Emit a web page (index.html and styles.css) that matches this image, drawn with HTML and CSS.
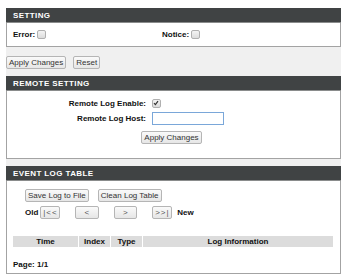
FILE: index.html
```html
<!DOCTYPE html>
<html>
<head>
<meta charset="utf-8">
<link rel="stylesheet" href="styles.css">
</head>
<body>
<div class="page">
  <div class="box">
    <div class="hd">SETTING</div>
    <div class="bd set-row">
      <div class="item">Error: <span class="cb"></span></div>
      <div class="item">Notice: <span class="cb"></span></div>
    </div>
  </div>
  <div class="bar">
    <button class="btn">Apply Changes</button>
    <button class="btn">Reset</button>
  </div>
  <div class="box">
    <div class="hd">REMOTE SETTING</div>
    <div class="bd remote">
      <div class="frow"><div class="lbl">Remote Log Enable:</div><span class="cb checked"><svg width="8" height="8" viewBox="0 0 8 8"><path d="M2 4.2 L3.4 5.6 L6 2.2" fill="none" stroke="#333" stroke-width="1.2"/></svg></span></div>
      <div class="frow"><div class="lbl">Remote Log Host:</div><input class="txt" type="text"></div>
      <div class="center"><button class="btn">Apply Changes</button></div>
    </div>
  </div>
  <div class="gap"></div>
  <div class="box">
    <div class="hd">EVENT LOG TABLE</div>
    <div class="bd evt">
      <div class="brow">
        <button class="btn">Save Log to File</button>
        <button class="btn">Clean Log Table</button>
      </div>
      <div class="nrow">
        <b class="old">Old</b>
        <button class="btn nav w20">|&lt;&lt;</button>
        <button class="btn nav w24">&lt;</button>
        <button class="btn nav w23">&gt;</button>
        <button class="btn nav w20">&gt;&gt;|</button>
        <b class="new">New</b>
      </div>
      <table class="log">
        <tr><th class="c1">Time</th><th class="c2">Index</th><th class="c3">Type</th><th>Log Information</th></tr>
      </table>
      <div class="pg">Page: 1/1</div>
    </div>
  </div>
</div>
</body>
</html>
```
FILE: styles.css
```css
html, body { margin: 0; padding: 0; background: #fff; }
body { font-family: "Liberation Sans", Arial, sans-serif; font-size: 8px; color: #111; }
.page { margin: 8px 0 0 6px; width: 335px; background: #f0f0f0; }
.box { background: #fff; }
.hd { height: 15px; line-height: 15px; background: #404344; color: #fff; font-weight: bold; font-size: 8px; letter-spacing: 0.4px; padding-left: 7px; border-bottom: 1px solid #8a8c8c; box-sizing: border-box; }
.bd { border: 1px solid #a3a3a3; border-top: none; box-sizing: border-box; }
.set-row { height: 24px; display: grid; grid-template-columns: 149px 1fr; align-items: center; padding-left: 6px; font-weight: bold; }
.item { display: flex; align-items: center; gap: 2px; }
.cb { display: inline-block; width: 7px; height: 7px; border: 1px solid #b0b0b0; border-radius: 2px; background: linear-gradient(#f4f4f4, #dcdcdc); position: relative; }
.cb svg { position: absolute; left: -1px; top: -1px; }
.bar { height: 29px; display: flex; align-items: flex-start; gap: 7px; padding-top: 9px; box-sizing: border-box; }
.btn { font-family: inherit; font-size: 8px; height: 13px; padding: 0 2px; margin: 0; border: 1px solid #b5b5b5; border-radius: 2px; background: linear-gradient(#fafafa, #e6e6e6); color: #333; line-height: 11px; white-space: nowrap; }
.remote { height: 68px; padding-top: 6px; }
.frow { display: flex; align-items: center; height: 12px; margin-bottom: 1px; }
.lbl { width: 145px; text-align: right; font-weight: bold; padding-right: 6px; box-sizing: border-box; }
.txt { width: 72px; height: 13px; box-sizing: border-box; border: 1px solid #7aa7d9; margin: 0; padding: 0; }
.remote .frow:nth-child(2) { margin-top: 2px; height: 14px; }
.center { text-align: center; margin-top: 6px; padding-right: 4px; }
.gap { height: 7px; }
.evt { height: 93px; padding: 8px 6px 0 6px; }
.brow { display: flex; gap: 9px; padding-left: 12px; }
.nrow { display: flex; align-items: center; padding-left: 12px; margin-top: 4px; }
.nav { padding: 0; text-align: center; margin-right: 15px; letter-spacing: 1px; color: #555; }
.old { margin-right: 2px; }
.nav.w20 { width: 20px; }
.nav.w24 { width: 24px; }
.nav.w23 { width: 23px; }
.nrow .nav:last-of-type { margin-right: 5px; }
.log { width: 322px; border-collapse: separate; border-spacing: 1px 0; margin-top: 17px; margin-left: -1px; }
.log th { background: #dcdcdc; height: 11px; padding: 0; font-size: 8px; font-weight: bold; line-height: 11px; }
.log .c1 { width: 65px; }
.log .c2 { width: 31px; }
.log .c3 { width: 31px; }
.pg { margin-top: 13px; font-weight: bold; }
```
